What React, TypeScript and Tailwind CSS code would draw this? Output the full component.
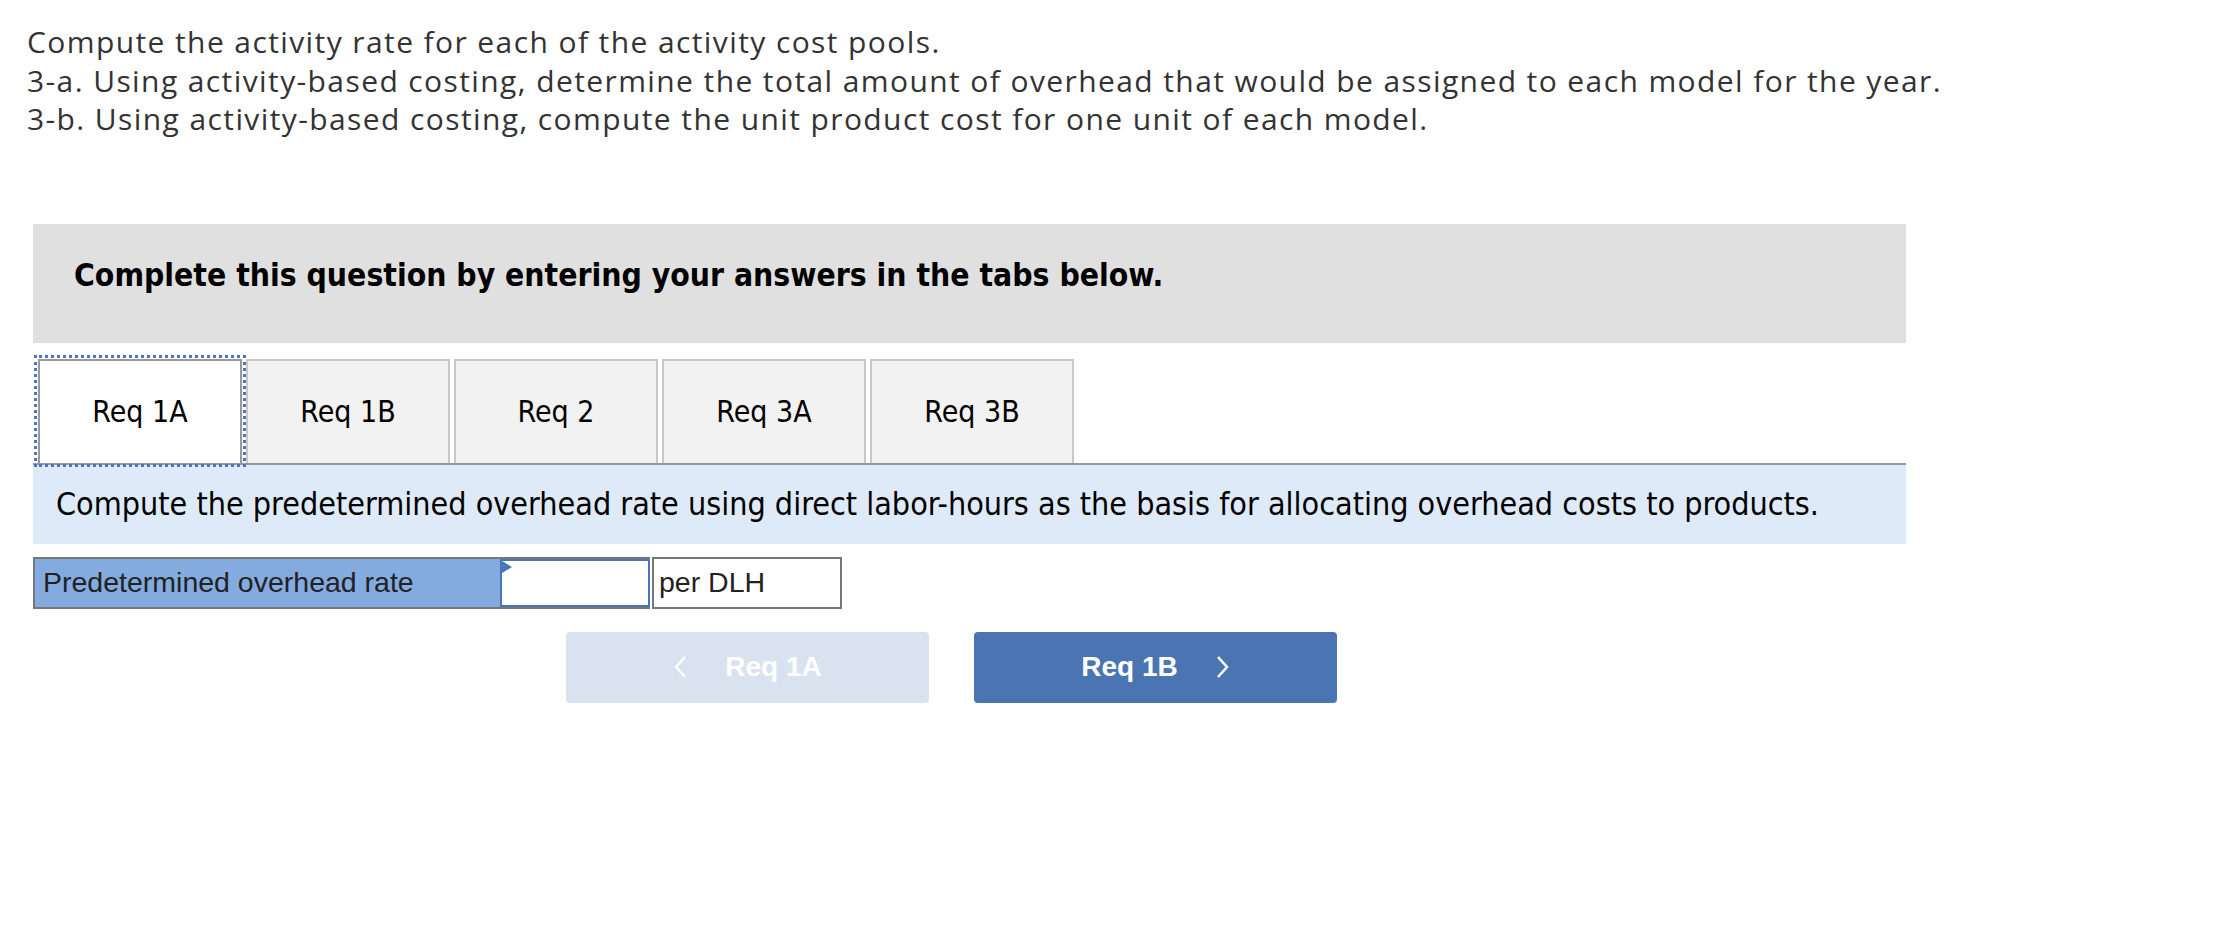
import React from 'react';

const tabs = ['Req 1A', 'Req 1B', 'Req 2', 'Req 3A', 'Req 3B'];

const App: React.FC = () => {
    return (
        <div className="min-h-screen w-full bg-white pt-[23px]">
            {/* Question text */}
            <div className="pl-[27px] font-['Open_Sans',sans-serif] text-[30px] leading-[38.5px] tracking-[1.4px] text-[#333]">
                <p>Compute the activity rate for each of the activity cost pools.</p>
                <p>3-a. Using activity-based costing, determine the total amount of overhead that would be assigned to each model for the year.</p>
                <p>3-b. Using activity-based costing, compute the unit product cost for one unit of each model.</p>
            </div>

            <div className="ml-[33px] mt-[85px] w-[1873px]">
                {/* Instructions banner */}
                <div className="h-[119px] bg-[#e0e0e0] px-[41px] pt-[28px]">
                    <h2 className="font-['DejaVu_Sans_Condensed','DejaVu_Sans',sans-serif] text-[31.6px] font-bold text-black">
                        Complete this question by entering your answers in the tabs below.
                    </h2>
                </div>

                {/* Tabs */}
                <div className="mt-[16px] flex gap-[4px] border-b-2 border-[#999] pl-[5px]">
                    {tabs.map((tab, i) => (
                        <button
                            key={tab}
                            className={`flex h-[104px] w-[204px] items-center justify-center border-2 border-b-0 font-['DejaVu_Sans_Condensed','DejaVu_Sans',sans-serif] text-[30px] text-black ${
                                i === 0
                                    ? 'border-[#999] bg-white outline-dotted outline-[3px] outline-offset-[1px] outline-[#4a76c0]'
                                    : 'border-[#c8c8c8] bg-[#f2f2f2]'
                            }`}
                        >
                            {tab}
                        </button>
                    ))}
                </div>

                {/* Tab content */}
                <div className="flex h-[79px] items-center bg-[#deeaf7] px-[23px]">
                    <p className="font-['DejaVu_Sans_Condensed','DejaVu_Sans',sans-serif] text-[32px] text-black">
                        Compute the predetermined overhead rate using direct labor-hours as the basis for allocating overhead costs to products.
                    </p>
                </div>

                <div className="mt-[13px] flex items-stretch font-['Liberation_Sans',Arial,sans-serif] text-[28.5px] text-[#222]">
                    <div className="flex h-[52px] w-[467px] items-center border-2 border-r-0 border-[#777] bg-[#84abe0] pl-[8px]">
                        Predetermined overhead rate
                    </div>
                    <div className="flex h-[52px] items-center border-y-2 border-[#777] bg-[#84abe0]">
                        <div className="relative h-[48px] w-[150px] border-2 border-[#4a76b8] bg-white">
                            <svg className="absolute left-0 top-0" width="10" height="12" viewBox="0 0 10 12">
                                <polygon points="0,0 10,6 0,12" fill="#4a76b8" />
                            </svg>
                        </div>
                    </div>
                    <div className="ml-[2px] flex h-[52px] w-[190px] items-center border-2 border-[#777] bg-white pl-[5px]">
                        per DLH
                    </div>
                </div>

                {/* Navigation */}
                <div className="mt-[23px] flex gap-[45px] pl-[533px] font-['Liberation_Sans',Arial,sans-serif] text-[28px] font-bold text-white">
                    <button className="flex h-[71px] w-[363px] items-center justify-center gap-[38px] rounded-[4px] bg-[#d9e3ef]">
                        <svg width="14" height="24" viewBox="0 0 14 24" fill="none">
                            <path d="M12 2L3 12l9 10" stroke="white" strokeWidth="2.5" />
                        </svg>
                        <span>Req 1A</span>
                    </button>
                    <button className="flex h-[71px] w-[363px] items-center justify-center gap-[38px] rounded-[4px] bg-[#4a74b2]">
                        <span>Req 1B</span>
                        <svg width="14" height="24" viewBox="0 0 14 24" fill="none">
                            <path d="M2 2l9 10-9 10" stroke="white" strokeWidth="2.5" />
                        </svg>
                    </button>
                </div>
            </div>
        </div>
    );
};

export default App;
